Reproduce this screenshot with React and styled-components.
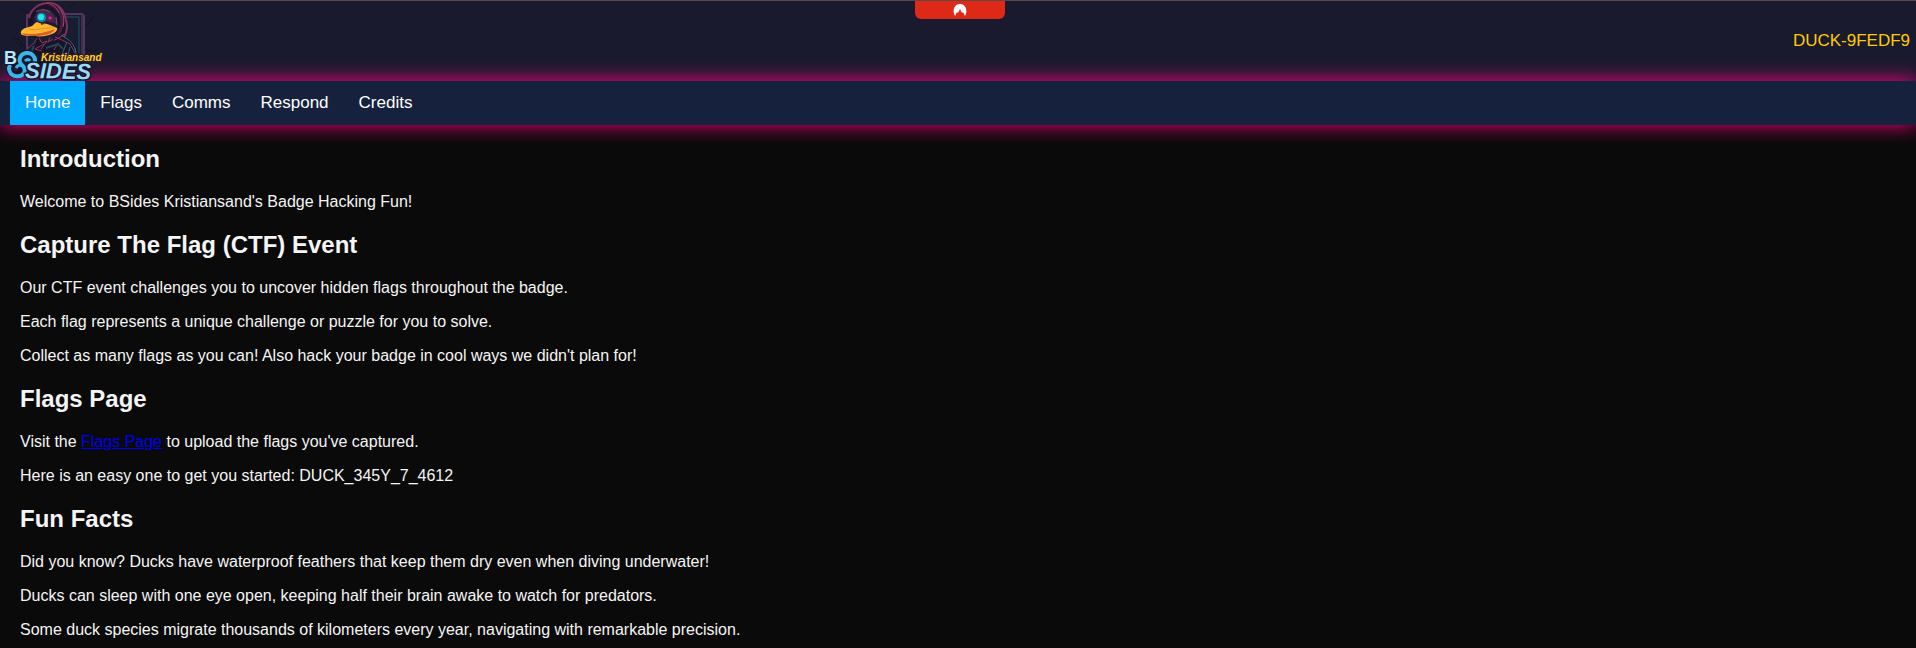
import React from "react";
import styled, { createGlobalStyle } from "styled-components";

const GlobalStyle = createGlobalStyle`
  body {
    margin: 0;
    background: #0a0a0a;
    color: #f5f5f5;
    font-family: Arial, "Liberation Sans", sans-serif;
    font-size: 16px;
    line-height: 18px;
  }
`;

const Page = styled.div`
  border-top: 1px solid #5b4a47;
`;

const Header = styled.header`
  position: relative;
  display: flex;
  align-items: center;
  justify-content: space-between;
  height: 80px;
  padding-right: 6px;
  background: #1a1a2e;
`;

const Logo = styled.svg`
  position: relative;
  z-index: 1;
  display: block;
  width: 110px;
  height: 80px;
  overflow: visible;
`;

const BadgeId = styled.span`
  color: #ffcc00;
  font-size: 17px;
  line-height: 20px;
`;

const PullTab = styled.button`
  position: absolute;
  top: 0;
  left: 50%;
  display: flex;
  justify-content: center;
  width: 90px;
  height: 18px;
  margin-left: -43px;
  padding: 3px 0 0;
  border: 0;
  border-radius: 0 0 6px 6px;
  background: #de2818;
`;

const Nav = styled.nav`
  position: relative;
  display: flex;
  padding: 0 10px;
  background: #16213e;
  box-shadow: 0 0 20px #ff0080;
`;

const NavLink = styled.a`
  padding: 12px 15px;
  background: ${(p) => (p.$active ? "#00aaff" : "transparent")};
  color: #ffffff;
  font-size: 17px;
  line-height: 20px;
  text-decoration: none;
`;

const Main = styled.main`
  padding: 20px;
`;

const Title = styled.h2`
  margin: 20px 0;
  font-size: 24px;
  line-height: 28px;

  &:first-child {
    margin-top: 0;
  }
`;

const Text = styled.p`
  margin: 16px 0;
`;

const InlineLink = styled.a`
  color: #0000ee;
`;

const BsidesLogo = () => (
  <Logo viewBox="0 1 110 80" role="img" aria-label="BSides Kristiansand">
    <g fill="none" stroke="#11131f" strokeWidth="1">
      <path d="M16 42l5 5 3-2 5 6M22 8l6 7M80 30l8-6 6-8M84 48l9 4 4-3M70 7l5-4M13 38l6 1 3 6" />
    </g>
    <path d="M26 14h56l2 3v50H27z" fill="#191d32" />
    <path d="M35 15h-8v36M61 14h21l2 2v40" fill="none" stroke="#54355f" strokeWidth="2" />
    <path d="M66 17h13v36" fill="none" stroke="#1d5265" />
    <path d="M82 16v40" stroke="#6c3c61" />
    <path d="M28 20c1-10 10-18 21-18 10 0 17 9 18 19 2 7 0 11-2 17 8 3 11 7 13 15v12H30V52l7-9z" fill="#171427" />
    <path d="M29 18C31 8 40 3 49 3c9 0 15 7 17 17 2 7 1 12-2 17" fill="none" stroke="#833260" strokeWidth="2" />
    <path d="M49 4c8 3 13 9 13 18 0 10-5 14-12 18" fill="none" stroke="#42213f" strokeWidth="3" />
    <path d="M58 7c5 4 7 12 5 20M47 3c6 1 10 5 12 10M64 34c-4 4-10 7-17 8" fill="none" stroke="#ad3a6a" />
    <path d="M33 22c0-8 6-13 13-13 7 0 12 7 12 16v10l-5 7H39z" fill="#201b34" />
    <path d="M35 17c2-5 7-8 11-7 7 1 10 7 10 14-4-2-8-3-11-2l-9-1z" fill="#3d2b4d" />
    <path d="M36 12c4-3 10-3 14 0M56 17l1 8" fill="none" stroke="#8d4b73" />
    <circle cx="41.500" cy="17.500" r="4.500" fill="#128fae" />
    <circle cx="41" cy="17" r="3" fill="#24e5ed" />
    <circle cx="50" cy="18" r="4" fill="#56214b" />
    <circle cx="50" cy="18" r="1.500" fill="#ed2791" />
    <path d="M37 22c3 2 7 1 10 2 3 1 6 2 10 4 1 2-2 5-5 6-5 2-12 3-17 2-6 0-12 0-14-2-1-4 3-6 8-7 5-1 5-4 8-5z" fill="#ffb52e" />
    <path d="M22 33c8 2 20 1 33-4-2 5-11 7-19 7-7 0-12 0-14-3z" fill="#cf632a" />
    <path d="M29 29c8 2 15-2 25-1" fill="none" stroke="#e78d27" />
    <path d="M41 24l3-1" stroke="#56301f" strokeWidth="2" />
    <path d="M37 38l-3 5-6 5-2 6M39 38l3 5 5-2-6 8M50 37l-2 5 5-3M55 37l7 3 8 4 5 9M44 44l-9 5 7 2M58 43l-4 7" fill="none" stroke="#913257" strokeWidth="1" />
    <path d="M61 35c5 4 12 5 15 17M67 42l-5 12M70 47l-2 8M75 48l2 12" fill="none" stroke="#236f84" />
    <path d="M46 48l12-4 5 5M34 46l-4 9" fill="none" stroke="#244458" strokeWidth="2" />
    <g fontFamily='"Liberation Sans", Arial, sans-serif' fontWeight="700" fontStyle="italic">
      <g fill="none" stroke="#101528" strokeWidth="7">
        <circle cx="16" cy="69" r="6" />
        <circle cx="27" cy="60" r="7" />
      </g>
      <g fill="none" stroke="#38b5ec" strokeWidth="4">
        <path d="M34 64c3-5-1-12-8-11-6 1-8 7-5 11 3 3 5 5 3 9-3 5-12 4-14-1-2-3-1-6 1-7" />
        <path d="M16 68c1-2 3-3 5-3M25 61c2-2 4-2 5 0" strokeWidth="3" />
      </g>
      <text x="4" y="64" fontSize="18" fontStyle="normal" fill="#bde5f6" stroke="#111c31" strokeWidth="2" paintOrder="stroke">B</text>
      <text x="25" y="78" fontSize="22" fill="#9cd7f4" stroke="#11182b" strokeWidth="3" paintOrder="stroke" transform="rotate(1 25 78)">SIDES</text>
      <text x="41" y="61" fontSize="10" fill="#ffd51c" stroke="#301a30" strokeWidth="2" paintOrder="stroke">Kristiansand</text>
    </g>
  </Logo>
);

const NAV_ITEMS = ["Home", "Flags", "Comms", "Respond", "Credits"];

export default function App() {
  return (
    <Page>
      <GlobalStyle />
      <Header>
        <BsidesLogo />
        <BadgeId>DUCK-9FEDF9</BadgeId>
        <PullTab type="button" aria-label="Collapse">
          <svg width="14" height="12" viewBox="0 0 14 12">
            <path d="M2 12C-1 7 1 0 7 0s8 7 5 12L10 8 9 9 7 5 5 9 4 8z" fill="#fff" />
          </svg>
        </PullTab>
      </Header>
      <Nav>
        {NAV_ITEMS.map((item) => (
          <NavLink key={item} href={`#${item.toLowerCase()}`} $active={item === "Home"}>
            {item}
          </NavLink>
        ))}
      </Nav>
      <Main>
        <Title>Introduction</Title>
        <Text>Welcome to BSides Kristiansand's Badge Hacking Fun!</Text>
        <Title>Capture The Flag (CTF) Event</Title>
        <Text>Our CTF event challenges you to uncover hidden flags throughout the badge.</Text>
        <Text>Each flag represents a unique challenge or puzzle for you to solve.</Text>
        <Text>Collect as many flags as you can! Also hack your badge in cool ways we didn't plan for!</Text>
        <Title>Flags Page</Title>
        <Text>
          Visit the <InlineLink href="#flags">Flags Page</InlineLink> to upload the flags you've captured.
        </Text>
        <Text>Here is an easy one to get you started: DUCK_345Y_7_4612</Text>
        <Title>Fun Facts</Title>
        <Text>Did you know? Ducks have waterproof feathers that keep them dry even when diving underwater!</Text>
        <Text>Ducks can sleep with one eye open, keeping half their brain awake to watch for predators.</Text>
        <Text>Some duck species migrate thousands of kilometers every year, navigating with remarkable precision.</Text>
      </Main>
    </Page>
  );
}
